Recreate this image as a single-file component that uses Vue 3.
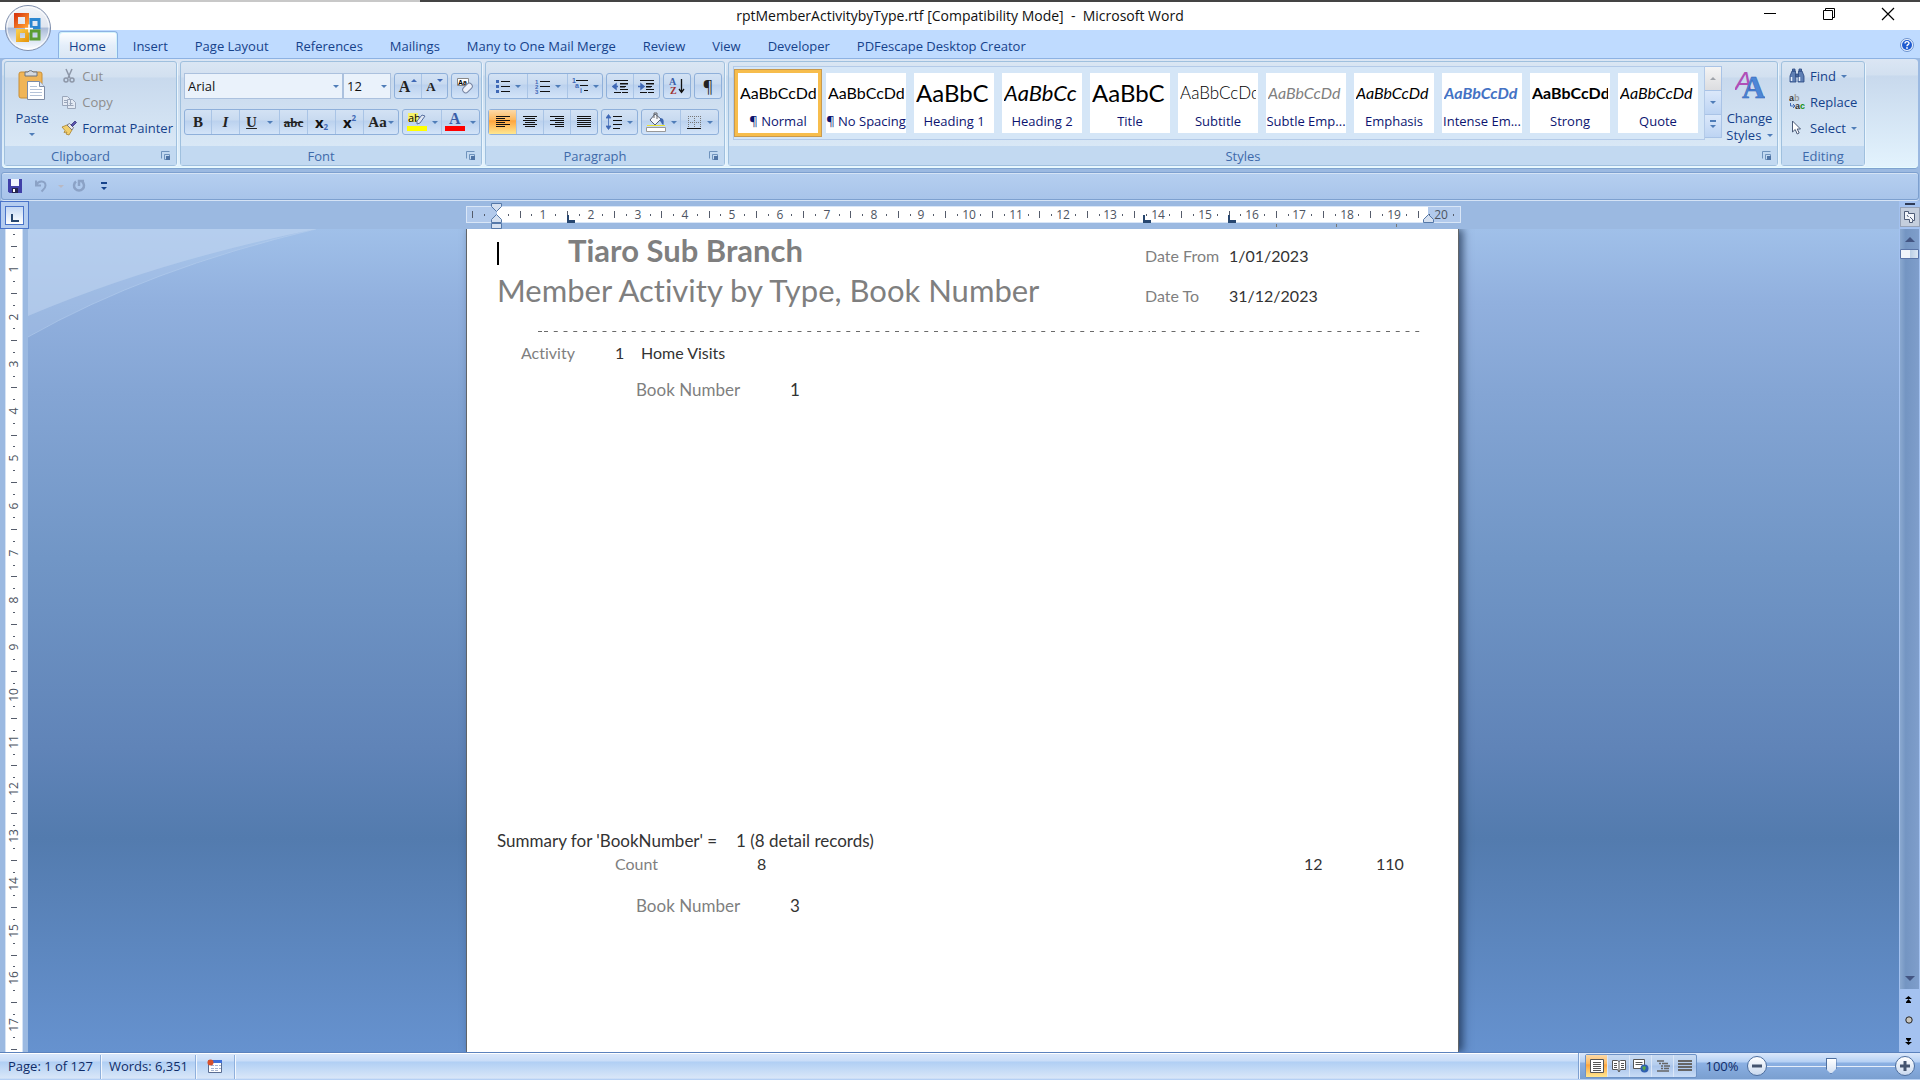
<template>
  <div class="word">
    <div class="backdrop-strip"></div>

    <header class="title-bar">
      <button class="office-btn" aria-label="Office Button">
        <svg width="48" height="48" viewBox="0 0 48 48">
          <defs>
            <linearGradient id="orb" x1="0" y1="0" x2="0" y2="1">
              <stop offset="0" stop-color="#f4f6fa" />
              <stop offset="0.48" stop-color="#dfe5ef" />
              <stop offset="0.5" stop-color="#a9bad6" />
              <stop offset="0.8" stop-color="#dfe8f5" />
              <stop offset="1" stop-color="#ffffff" />
            </linearGradient>
            <linearGradient id="logoRed" x1="0" y1="0" x2="1" y2="1">
              <stop offset="0" stop-color="#d93a10" />
              <stop offset="1" stop-color="#ff9a2e" />
            </linearGradient>
            <linearGradient id="logoYellow" x1="0" y1="0" x2="1" y2="1">
              <stop offset="0" stop-color="#f7c948" />
              <stop offset="1" stop-color="#e89a10" />
            </linearGradient>
          </defs>
          <circle cx="24" cy="24" r="22.5" fill="url(#orb)" stroke="#7f8fad" />
          <circle cx="24" cy="24" r="21" fill="none" stroke="#fff" stroke-opacity="0.8" />
          <rect x="12" y="11" width="11" height="11" fill="none" stroke="url(#logoRed)" stroke-width="4" />
          <rect x="27" y="15.5" width="8" height="8" fill="none" stroke="#2b86d0" stroke-width="3" />
          <rect x="14" y="27" width="9" height="9" fill="none" stroke="url(#logoYellow)" stroke-width="4" />
          <rect x="27" y="27" width="8" height="8" fill="none" stroke="#5a9c30" stroke-width="3" />
          <path d="M21 24.500h8M25 20.500v8" stroke="#fff" stroke-width="1.5" />
        </svg>
      </button>
      <h1>rptMemberActivitybyType.rtf [Compatibility Mode] &nbsp;- &nbsp;Microsoft Word</h1>
      <div class="window-btns">
        <button aria-label="Minimize">
          <svg width="14" height="14"><path d="M1 6.500h12" stroke="#000" /></svg>
        </button>
        <button aria-label="Restore">
          <svg width="14" height="14" fill="none" stroke="#000"><path d="M1.500 3.500h9v9h-9zM3.500 3V1.500h9v9H11" /></svg>
        </button>
        <button aria-label="Close">
          <svg width="14" height="14"><path d="M1 1l12 12M13 1L1 13" stroke="#000" stroke-width="1.200" /></svg>
        </button>
      </div>
    </header>

    <nav class="tabs">
      <button v-for="tab in tabs" :key="tab" :class="{ active: tab === activeTab }" @click="activeTab = tab">
        {{ tab }}
      </button>
      <button class="help" aria-label="Help">
        <svg width="14" height="14" viewBox="0 0 14 14">
          <circle cx="7" cy="7" r="6.500" fill="#eaf2ff" stroke="#6d93cf" />
          <circle cx="7" cy="7" r="5" fill="#1f5bd0" />
          <path d="M5 5.600c0-2.600 4-2.600 4-.4 0 1.400-2 1.500-2 3" fill="none" stroke="#fff" stroke-width="1.400" />
          <circle cx="7" cy="10" r="0.900" fill="#fff" />
        </svg>
      </button>
    </nav>

    <div class="ribbon">
      <section class="group clipboard">
        <div class="body">
          <button class="big paste">
            <svg width="28" height="32" viewBox="0 0 28 32">
              <rect x="1" y="3" width="23" height="26" rx="2" fill="#f0b557" stroke="#c98f36" />
              <path d="M7 3h3a3 3 0 0 1 5 0h4v4H7z" fill="#d5d9de" stroke="#6d737c" />
              <path d="M9.500 12.500h12l5 5v13h-17z" fill="#fff" stroke="#7d8ca6" />
              <path d="M21.500 12.500v5h5" fill="#dbe5f3" stroke="#7d8ca6" />
              <path d="M12 17.500h7M12 20.500h12M12 23.500h12M12 26.500h12" stroke="#b5c3d8" />
            </svg>
            <span>Paste</span>
            <i class="arrow"></i>
          </button>
          <div class="stack">
            <button class="row-btn disabled">
              <svg width="16" height="16" viewBox="0 0 16 16" fill="none" stroke="#8d97a8" stroke-width="1.500">
                <path d="M5 1l4 9M11 1L7 10" />
                <circle cx="5" cy="12" r="2" /><circle cx="11" cy="12" r="2" />
              </svg>
              Cut
            </button>
            <button class="row-btn disabled">
              <svg width="16" height="16" viewBox="0 0 16 16" fill="#e3eaf4" stroke="#9aa6ba">
                <path d="M1.500 2.500h5l3 3v6h-8zM6.500 5.500h5l3 3v6h-8z" />
                <path d="M3 6.500h3M3 8.500h3M8.500 9.500h3M8.500 11.500h4" />
              </svg>
              Copy
            </button>
            <button class="row-btn">
              <svg width="16" height="16" viewBox="0 0 16 16">
                <path d="M1 7l5-2 5 5-3 5-3-1 1-2-3 .500 1-2z" fill="#f1cf6d" stroke="#a9822f" stroke-width="0.800" />
                <path d="M6 5l2.500-1.500 4 4L11 10z" fill="#e8e8ee" stroke="#65656f" stroke-width="0.800" />
                <path d="M10 5l4-4 1.500 1.500-4 4z" fill="#5b55ad" stroke="#37327c" stroke-width="0.800" />
              </svg>
              Format Painter
            </button>
          </div>
        </div>
        <footer class="caption">
          <span>Clipboard</span>
          <button class="launcher" aria-label="Clipboard options"><svg width="10" height="10" viewBox="0 0 10 10"><path d="M.5 7.500v-7h8M3.500 3.500h5v5h-5z" fill="none" stroke="#6f93bd" /><path d="M5 5h4v4H5z" fill="#4f74a5" /></svg></button>
        </footer>
      </section>

      <section class="group font">
        <div class="body rows">
          <div class="tools">
            <label class="combo family">
              <select aria-label="Font"><option>Arial</option></select>
              <i class="arrow"></i>
            </label>
            <label class="combo size">
              <select aria-label="Font Size"><option>12</option></select>
              <i class="arrow"></i>
            </label>
            <div class="btn-group">
              <button class="w26 serif" aria-label="Grow Font"><b class="grow">A</b><i class="caret up"></i></button>
              <button class="w26 serif" aria-label="Shrink Font"><b class="shrink">A</b><i class="caret down"></i></button>
            </div>
            <div class="btn-group">
              <button class="w26" aria-label="Clear Formatting">
                <svg width="18" height="18" viewBox="0 0 18 18">
                  <path d="M1.500 1.500h11v7h-11z" fill="#fff" stroke="#888" />
                  <text x="2" y="8" font-size="7" font-weight="bold" font-family="Liberation Sans, sans-serif">Aa</text>
                  <rect x="6" y="8" width="11" height="6" rx="3" transform="rotate(-45 11.500 11)" fill="#eef2fa" stroke="#7482a0" />
                </svg>
              </button>
            </div>
          </div>
          <div class="tools">
            <div class="btn-group">
              <button class="w26 serif"><b>B</b></button>
              <button class="w28 serif"><b><em>I</em></b></button>
              <button class="w40 serif"><b><u>U</u></b><i class="arrow"></i></button>
              <button class="w28 serif strike"><s>abc</s></button>
              <button class="w28 sub-super"><b>x</b><sub>2</sub></button>
              <button class="w28 sub-super"><b>x</b><sup>2</sup></button>
              <button class="w34 serif change-case"><b>Aa</b><i class="arrow"></i></button>
            </div>
            <div class="btn-group">
              <button class="w38" aria-label="Text Highlight Color">
                <svg width="20" height="20" viewBox="0 0 20 20">
                  <path d="M1 1h10v9H1z" fill="#f7f36b" />
                  <text x="1" y="10" font-size="11" font-family="Open Sans, sans-serif">ab</text>
                  <path d="M10 9l5-6 3 1-5 7-3 1z" fill="#e1e8f3" stroke="#5870a0" />
                  <path d="M0 14h20v5H0z" fill="#ff0" />
                </svg>
                <i class="arrow"></i>
              </button>
              <button class="w38" aria-label="Font Color">
                <svg width="20" height="20" viewBox="0 0 20 20">
                  <text x="4" y="12" font-size="16" font-weight="bold" fill="#3a5ea8" font-family="Liberation Serif, serif">A</text>
                  <path d="M0 14h20v5H0z" fill="#f00" />
                </svg>
                <i class="arrow"></i>
              </button>
            </div>
          </div>
        </div>
        <footer class="caption">
          <span>Font</span>
          <button class="launcher" aria-label="Font options"><svg width="10" height="10" viewBox="0 0 10 10"><path d="M.5 7.500v-7h8M3.500 3.500h5v5h-5z" fill="none" stroke="#6f93bd" /><path d="M5 5h4v4H5z" fill="#4f74a5" /></svg></button>
        </footer>
      </section>

      <section class="group paragraph">
        <div class="body rows">
          <div class="tools">
            <div class="btn-group">
              <button class="w38" aria-label="Bullets">
                <svg width="14" height="14" viewBox="0 0 14 14">
                  <path d="M5 2.500h9M5 7.500h9M5 12.500h9" stroke="#111" />
                  <path d="M0 1h3v3H0zM0 6h3v3H0zM0 11h3v3H0z" fill="#3f68b5" />
                </svg>
                <i class="arrow"></i>
              </button>
              <button class="w40" aria-label="Numbering">
                <svg width="15" height="15" viewBox="0 0 15 15">
                  <path d="M5 2.500h10M5 7.500h10M5 12.500h10" stroke="#111" />
                  <g font-size="6" font-weight="bold" fill="#3f68b5" font-family="Liberation Sans, sans-serif">
                    <text x="0" y="5">1</text><text x="0" y="10">2</text><text x="0" y="15">3</text>
                  </g>
                </svg>
                <i class="arrow"></i>
              </button>
              <button class="w34" aria-label="Multilevel List">
                <svg width="16" height="16" viewBox="0 0 16 16">
                  <path d="M4 2.500h12M8 7.500h8M12 12.500h4" stroke="#111" />
                  <g font-size="7" font-weight="bold" fill="#3f68b5" font-family="Liberation Sans, sans-serif">
                    <text x="0" y="5">1</text><text x="3" y="10">a</text><text x="8" y="15">i</text>
                  </g>
                </svg>
                <i class="arrow"></i>
              </button>
            </div>
            <div class="btn-group">
              <button class="w26" aria-label="Decrease Indent">
                <svg width="17" height="15" viewBox="0 0 17 15">
                  <path d="M2 1.500h14M8 4.500h8M8 7.500h6M8 10.500h8M2 13.500h7M10 13.500h6" stroke="#111" />
                  <path d="M8 4h8v1.500H8zM8 7h5v1.500H8z" fill="#111" />
                  <path d="M6 7.500H2M4 5L1 7.500l3 2.500z" fill="#3f68b5" stroke="#3f68b5" stroke-width="1.500" />
                </svg>
              </button>
              <button class="w26" aria-label="Increase Indent">
                <svg width="17" height="15" viewBox="0 0 17 15">
                  <path d="M2 1.500h14M8 4.500h8M8 7.500h6M8 10.500h8M2 13.500h7M10 13.500h6" stroke="#111" />
                  <path d="M8 4h8v1.500H8zM8 7h5v1.500H8z" fill="#111" />
                  <path d="M0 7.500h4M3 5l3 2.500L3 10z" fill="#3f68b5" stroke="#3f68b5" stroke-width="1.500" />
                </svg>
              </button>
            </div>
            <div class="btn-group">
              <button class="w26" aria-label="Sort">
                <svg width="16" height="18" viewBox="0 0 16 18">
                  <g font-size="10" font-weight="bold" font-family="Liberation Serif, serif">
                    <text x="0" y="8" fill="#3a5ea8">A</text><text x="1" y="17" fill="#a03030">Z</text>
                  </g>
                  <path d="M12.500 2v13M10 12l2.500 3.500L15 12" fill="none" stroke="#111" stroke-width="1.300" />
                </svg>
              </button>
            </div>
            <div class="btn-group">
              <button class="w26 pilcrow" aria-label="Show paragraph marks">¶</button>
            </div>
          </div>
          <div class="tools">
            <div class="btn-group">
              <button
                v-for="align in alignments"
                :key="align.name"
                :class="['align', { pressed: align.name === activeAlign }]"
                :aria-label="align.name"
                @click="activeAlign = align.name"
              >
                <svg width="16" height="12" viewBox="0 0 16 12"><path :d="align.path" stroke="#111" /></svg>
              </button>
            </div>
            <div class="btn-group">
              <button class="w34" aria-label="Line Spacing">
                <svg width="16" height="16" viewBox="0 0 16 16">
                  <path d="M7 2.500h9M7 6.500h9M7 10.500h9M7 14.500h7" stroke="#111" />
                  <path d="M2.500 2v12M0 4l2.500-3.500L5 4zM0 12l2.500 3.500L5 12z" fill="#3f68b5" stroke="#3f68b5" stroke-width="0.800" />
                </svg>
                <i class="arrow"></i>
              </button>
            </div>
            <div class="btn-group">
              <button class="w38" aria-label="Shading">
                <svg width="20" height="20" viewBox="0 0 20 20">
                  <path d="M9 2l6 5-6 6-5-5z" fill="#f4f6fa" stroke="#555f73" />
                  <path d="M8 6V1h3v6" fill="none" stroke="#666" />
                  <path d="M14 6c4 0 4 3 3.500 7-1.500 0-2-3-3.500-4z" fill="#3d66ad" />
                  <path d="M1 13.500h18" stroke="#ece531" />
                  <path d="M.5 15.500h19v4H.5z" fill="#fff" stroke="#999" />
                </svg>
                <i class="arrow"></i>
              </button>
              <button class="w38" aria-label="Borders">
                <svg width="15" height="15" viewBox="0 0 15 15">
                  <path d="M1.500 1v12M7.500 1v12M13.500 1v12M1 1.500h13M1 7.500h13" stroke="#777" stroke-dasharray="1 1" />
                  <path d="M0 13.500h14" stroke="#111" />
                </svg>
                <i class="arrow"></i>
              </button>
            </div>
          </div>
        </div>
        <footer class="caption">
          <span>Paragraph</span>
          <button class="launcher" aria-label="Paragraph options"><svg width="10" height="10" viewBox="0 0 10 10"><path d="M.5 7.500v-7h8M3.500 3.500h5v5h-5z" fill="none" stroke="#6f93bd" /><path d="M5 5h4v4H5z" fill="#4f74a5" /></svg></button>
        </footer>
      </section>

      <section class="group styles">
        <div class="body">
          <div class="gallery">
            <button
              v-for="style in styles"
              :key="style.name"
              :class="['tile', style.kind, { selected: style.name === activeStyle }]"
              @click="activeStyle = style.name"
            >
              <span class="preview">{{ style.sample }}</span>
              <span class="name">{{ style.name }}</span>
            </button>
          </div>
          <div class="gallery-nav">
            <button class="off" aria-label="Previous styles"><i class="arrow up"></i></button>
            <button aria-label="Next styles"><i class="arrow"></i></button>
            <button class="more" aria-label="More styles"><i class="arrow"></i></button>
          </div>
          <button class="big change-styles">
            <svg width="30" height="30" viewBox="0 0 30 30" font-family="Liberation Serif, serif" font-weight="bold">
              <text x="0" y="20" font-size="26" fill="#b04fb8" font-family="Liberation Sans, sans-serif" font-weight="normal" font-style="italic">A</text>
              <text x="7" y="28" font-size="32" fill="#4d86d6" stroke="#2f62b5" stroke-width="0.500">A</text>
            </svg>
            <span>Change</span>
            <span>Styles <i class="arrow"></i></span>
          </button>
        </div>
        <footer class="caption">
          <span>Styles</span>
          <button class="launcher" aria-label="Styles options"><svg width="10" height="10" viewBox="0 0 10 10"><path d="M.5 7.500v-7h8M3.500 3.500h5v5h-5z" fill="none" stroke="#6f93bd" /><path d="M5 5h4v4H5z" fill="#4f74a5" /></svg></button>
        </footer>
      </section>

      <section class="group editing">
        <div class="body">
          <div class="stack">
            <button class="row-btn">
              <svg width="16" height="16" viewBox="0 0 16 16" fill="#5f7fb4" stroke="#27457e" stroke-width="0.800">
                <path d="M3 3h3.500v4L7 14H1V8zM9.500 3H13l2 5v6H9l.5-7z" />
                <path d="M3.500 1H6v2H3.500zM10 1h2.500v2H10zM7 6h2v3H7z" />
                <path d="M2.500 9v4M10.500 9v4" stroke="#e6eefa" stroke-width="1.500" />
              </svg>
              Find <i class="arrow"></i>
            </button>
            <button class="row-btn">
              <svg width="16" height="16" viewBox="0 0 16 16" font-size="9" font-weight="bold" font-family="Liberation Sans, sans-serif">
                <text x="0" y="7" fill="#333">a</text><text x="5" y="7" fill="#999">b</text>
                <text x="6" y="15" fill="#333">a</text><text x="11" y="15" fill="#159015">c</text>
                <path d="M1.500 9v3h4M4 10l2 2-2 2" fill="none" stroke="#3f68b5" />
              </svg>
              Replace
            </button>
            <button class="row-btn">
              <svg width="16" height="16" viewBox="0 0 16 16">
                <path d="M3.500 1v11l2.700-2.500 2 4.500 2-1-2-4h3.300z" fill="#fff" stroke="#4a5a78" />
              </svg>
              Select <i class="arrow"></i>
            </button>
          </div>
        </div>
        <footer class="caption"><span>Editing</span></footer>
      </section>
    </div>

    <div class="quick-access">
      <button aria-label="Save">
        <svg width="14" height="14" viewBox="0 0 14 14">
          <path d="M0 0h14v14H1.500L0 12.500z" fill="#4040a8" />
          <path d="M3 0h8v7H3z" fill="#f1f5ff" /><path d="M4 9h6v5H4z" fill="#26264e" /><path d="M5 10h2v3H5z" fill="#fff" />
        </svg>
      </button>
      <button aria-label="Undo" disabled>
        <svg width="14" height="14" viewBox="0 0 14 14" fill="none" stroke="#8ba2c6" stroke-width="2">
          <path d="M2 1.500v5h5M2.500 6c2-5 9-4.500 9 .500 0 3-2 4-4 6" />
        </svg>
      </button>
      <i class="arrow pale"></i>
      <button class="repeat" aria-label="Repeat" disabled>
        <svg width="14" height="14" viewBox="0 0 14 14" fill="none" stroke="#8ba2c6" stroke-width="2.500">
          <path d="M4 2.500a5 5 0 1 0 6 0M7 7V2h5" />
        </svg>
      </button>
      <button class="customize" aria-label="Customize Quick Access Toolbar"><i class="arrow"></i></button>
    </div>

    <main class="workspace">
      <button class="tab-stop" aria-label="Left Tab"><span><i></i></span></button>
      <div class="ruler-row">
        <svg class="h-ruler" width="995" height="28" viewBox="0 0 995 28">
          <rect x="0.500" y="5.500" width="994" height="16" fill="#b2caec" stroke="#d9e6f7" />
          <rect x="31" y="6" width="931" height="15" fill="#fff" />
          <g v-for="mark in hMarks" :key="mark.q">
            <text v-if="mark.label" :x="mark.pos" y="18" class="ruler-num">{{ mark.label }}</text>
            <rect v-else :x="mark.pos" :y="mark.half ? 10 : 13" width="1" :height="mark.half ? 7 : 2" fill="#555c6b" />
          </g>
          <path v-for="x in tabStops" :key="x" :d="`M${x} 14h2v5h6v3h-8z`" fill="#27466f" />
          <path d="M810.500 23v3M870.500 23v3M930.500 23v3" stroke="#777" />
          <g fill="#d5e0f0" stroke="#5578a8">
            <path d="M25.500 2.500h10v3l-5 5-5-5zM30.500 13.500l5 5v3h-10v-3zM25.500 22.500h10v5h-10z" />
            <path d="M962.500 13.500l5 5v3h-10v-3z" />
          </g>
        </svg>
      </div>
      <div class="view-ruler">
        <span class="split-handle"></span>
        <button aria-label="View Ruler">
          <svg width="12" height="12" viewBox="0 0 12 12" fill="#f2f5fa" stroke="#4f5d78">
            <path d="M.5.500h4v2h6v7h-2v2h-3v-3h-5z" /><path d="M3 4l1.500 2M6 6l3 3" />
          </svg>
        </button>
      </div>

      <div class="v-ruler">
        <svg width="18" height="823">
          <g v-for="mark in vMarks" :key="mark.q">
            <text
              v-if="mark.label"
              x="0"
              y="4"
              :transform="`translate(9 ${mark.pos}) rotate(-90)`"
              class="ruler-num"
            >{{ mark.label }}</text>
            <rect v-else :x="mark.half ? 6 : 8" :y="mark.pos" :width="mark.half ? 6 : 2" height="1" fill="#555c6b" />
          </g>
        </svg>
      </div>

      <div class="canvas">
        <svg class="swoosh" width="300" height="115" viewBox="0 0 300 115">
          <path d="M0 0h288Q120 40 0 108z" fill="#b8d0ee" fill-opacity="0.3" />
          <path d="M0 0h288Q130 32 0 87z" fill="#c4d8f2" fill-opacity="0.5" />
          <path d="M288 0Q120 40 0 108" fill="none" stroke="#b9d2f0" stroke-opacity="0.5" />
        </svg>
        <article class="page">
          <div class="line heading">
            <span class="cursor"></span>
            <h2>Tiaro Sub Branch</h2>
            <span class="label">Date From</span>
            <span>1/01/2023</span>
          </div>
          <div class="line heading">
            <h3>Member Activity by Type, Book Number</h3>
            <span class="label">Date To</span>
            <span>31/12/2023</span>
          </div>
          <svg class="dashes" width="884" height="1">
            <path d="M0 0.500h5M6 0.500H612M614 0.500H884" stroke="#6a6a6a" stroke-dasharray="4 5.750" />
          </svg>
          <div class="line activity">
            <span class="label">Activity</span><span>1</span><span>Home Visits</span>
          </div>
          <div class="line book">
            <span class="label">Book Number</span><span>1</span>
          </div>
          <div class="line summary">
            <span>Summary for 'BookNumber' =</span><span>1 (8 detail records)</span>
          </div>
          <div class="line count">
            <span class="label">Count</span><span>8</span><span>12</span><span>110</span>
          </div>
          <div class="line book next">
            <span class="label">Book Number</span><span>3</span>
          </div>
        </article>
      </div>

      <div class="scrollbar">
        <div class="track">
          <i class="scroll-arrow up"></i>
          <div class="thumb"></div>
          <i class="scroll-arrow down"></i>
        </div>
        <div class="browse">
          <button aria-label="Previous Page"><svg width="7" height="7"><path d="M0 3l3.500-3L7 3zM1 6l2.500-3L6 6zM1 6h5v1H1z" /></svg></button>
          <button aria-label="Select Browse Object"><svg width="8" height="8"><circle cx="4" cy="4" r="3.200" fill="#c9c5bd" stroke="#222" /></svg></button>
          <button aria-label="Next Page"><svg width="7" height="7"><path d="M0 4l3.500 3L7 4zM1 1l2.500 3L6 1zM1 0h5v1H1z" /></svg></button>
        </div>
      </div>
    </main>

    <footer class="status-bar">
      <span class="cell">Page: 1 of 127</span>
      <span class="cell">Words: 6,351</span>
      <span class="cell macro">
        <svg width="16" height="14" viewBox="0 0 16 14">
          <path d="M1.500 1.500h13v12h-13z" fill="#fff" stroke="#5a6d92" />
          <path d="M2 1h13v3H2z" fill="#3f6fd8" />
          <path d="M4 6.500h3M8 6.500h3M12 6.500h2M4 9.500h3M8 9.500h3M12 9.500h2M4 11.500h3M8 11.500h3" stroke="#a5b3cf" />
          <circle cx="3.500" cy="3.500" r="3" fill="#d8512c" />
        </svg>
      </span>
      <div class="status-right">
        <div class="views">
          <button class="pressed" aria-label="Print Layout">
            <svg width="14" height="14" viewBox="0 0 14 14"><path d="M.5.500h13v13H.5z" fill="#fff" stroke="#555" /><path d="M3 3.500h8M3 5.500h8M3 7.500h8M3 9.500h8M3 11.500h8" stroke="#555" /></svg>
          </button>
          <button aria-label="Full Screen Reading">
            <svg width="14" height="14" viewBox="0 0 14 14" fill="#fff" stroke="#555"><path d="M.5 1.500h5l1.500 1 1.500-1h5v9h-5L7 13l-1.500-2.500h-5zM7 2.500V12M2 4.500h3M2 6.500h3M2 8.500h3M9 4.500h3M9 6.500h3M9 8.500h3" /></svg>
          </button>
          <button aria-label="Web Layout">
            <svg width="16" height="14" viewBox="0 0 16 14"><path d="M.5.500h11v9H.5z" fill="#fff" stroke="#555" /><path d="M2.500 3.500h7M2.500 5.500h7" stroke="#555" /><circle cx="11.500" cy="9.500" r="4" fill="#2f5fb0" /><path d="M9 8l3-1 1 2-2 3z" fill="#58a848" /></svg>
          </button>
          <button aria-label="Outline">
            <svg width="14" height="12" viewBox="0 0 14 12"><path d="M1 1h7M3 3.500h2M6 3.500h6M5 6h2M8 6h6M5 8.500h2M8 8.500h5M1 11h12" stroke="#666" stroke-width="1.500" /></svg>
          </button>
          <button aria-label="Draft">
            <svg width="14" height="12" viewBox="0 0 14 12"><path d="M0 1h14M0 4h14M0 7h14M0 10h14" stroke="#666" stroke-width="2" /></svg>
          </button>
        </div>
        <span class="zoom-value">100%</span>
        <button class="round" aria-label="Zoom Out">
          <svg width="12" height="12"><path d="M1 6h10" stroke="#44546f" stroke-width="3" /></svg>
        </button>
        <input v-model="zoom" type="range" min="0" max="200" aria-label="Zoom" />
        <button class="round" aria-label="Zoom In">
          <svg width="12" height="12"><path d="M1 6h10M6 1v10" stroke="#44546f" stroke-width="3" /></svg>
        </button>
      </div>
    </footer>
  </div>
</template>

<script setup>
import { ref } from 'vue'

const activeTab = ref('Home')
const activeStyle = ref('¶ Normal')
const activeAlign = ref('Align Left')
const zoom = ref(100)

const tabs = [
  'Home', 'Insert', 'Page Layout', 'References', 'Mailings',
  'Many to One Mail Merge', 'Review', 'View', 'Developer', 'PDFescape Desktop Creator',
]

const alignments = [
  { name: 'Align Left', path: 'M1 .5h14M1 2.500h9M1 4.500h14M1 6.500h9M1 8.500h14M1 10.500h9' },
  { name: 'Center', path: 'M1 .5h14M3 2.500h10M1 4.500h14M3 6.500h10M1 8.500h14M3 10.500h10' },
  { name: 'Align Right', path: 'M1 .5h14M6 2.500h9M1 4.500h14M6 6.500h9M1 8.500h14M6 10.500h9' },
  { name: 'Justify', path: 'M1 .5h14M1 2.500h14M1 4.500h14M1 6.500h14M1 8.500h14M1 10.500h14' },
]

const styles = [
  { name: '¶ Normal', sample: 'AaBbCcDd', kind: 'plain' },
  { name: '¶ No Spacing', sample: 'AaBbCcDd', kind: 'plain' },
  { name: 'Heading 1', sample: 'AaBbC', kind: 'large' },
  { name: 'Heading 2', sample: 'AaBbCc', kind: 'medium' },
  { name: 'Title', sample: 'AaBbC', kind: 'large' },
  { name: 'Subtitle', sample: 'AaBbCcDd', kind: 'light' },
  { name: 'Subtle Emp...', sample: 'AaBbCcDd', kind: 'subtle' },
  { name: 'Emphasis', sample: 'AaBbCcDd', kind: 'italic' },
  { name: 'Intense Em...', sample: 'AaBbCcDd', kind: 'intense' },
  { name: 'Strong', sample: 'AaBbCcDd', kind: 'strong' },
  { name: 'Quote', sample: 'AaBbCcDd', kind: 'italic' },
]

const tabStops = [101, 677, 762]

// one mark per quarter centimetre, numbers on whole centimetres
const CM = 47.26
function marks(from, to, origin) {
  const list = []
  for (let q = from; q <= to; q++) {
    if (q === 0) continue
    list.push({
      q,
      pos: Math.round(origin + (q * CM) / 4),
      label: q > 0 && q % 4 === 0 ? q / 4 : null,
      half: Math.abs(q % 4) === 2,
    })
  }
  return list
}

const hMarks = marks(-2, 81, 30)
const vMarks = marks(1, 70, -7)
</script>

<style>
body {
  margin: 0;
}
</style>

<style scoped>
.word {
  min-height: 100vh;
  display: flex;
  flex-direction: column;
  font-family: "Open Sans", "Noto Sans", sans-serif;
  font-size: 13px;
  line-height: 17px;
  color: #15428b;
  background: #9bb9e1;
}

button {
  font: inherit;
  color: inherit;
  background: none;
  border: none;
  padding: 0;
  display: flex;
  align-items: center;
  justify-content: center;
  white-space: nowrap;
}

.arrow {
  display: inline-block;
  flex: none;
  border: 3px solid transparent;
  border-top-color: #4f7db8;
  border-bottom-width: 0;
}

.arrow.up {
  border-top-width: 0;
  border-bottom: 3px solid #a0a4aa;
}

.backdrop-strip {
  height: 2px;
  background: linear-gradient(90deg, #444 60px, #c8c8c8 60px, #c8c8c8 420px, #444 420px);
}

/* title bar */
.title-bar {
  position: relative;
  height: 28px;
  display: flex;
  justify-content: center;
  background: #fff;
}

.title-bar h1 {
  margin: 0;
  font-size: 14px;
  font-weight: 400;
  line-height: 28px;
  color: #111;
}

.office-btn {
  position: absolute;
  left: 4px;
  top: 2px;
  z-index: 2;
}

.window-btns {
  position: absolute;
  right: 25px;
  top: 5px;
  display: flex;
  gap: 45px;
}

/* tabs */
.tabs {
  height: 28px;
  padding-left: 59px;
  display: flex;
  align-items: flex-end;
  gap: 3px;
  background: #bfdbff;
}

.tabs button {
  box-sizing: border-box;
  height: 27px;
  padding: 4px 12px 0;
}

.tabs .active {
  margin: 0 0 -1px -1px;
  height: 28px;
  padding: 2px 11px 0 10px;
  border: 1px solid #8db2e3;
  border-bottom: none;
  border-radius: 4px 4px 0 0;
  background: linear-gradient(#fff, #e4eefa 50%, #dbe6f4);
  box-shadow: inset 1px 1px 0 #d2f2fb, inset -1px 0 0 #d2f2fb;
}

.tabs .help {
  margin-left: auto;
  padding: 0 6px;
}

/* ribbon */
.ribbon {
  height: 107px;
  margin: 0 2px;
  padding: 2px 53px 0 2px;
  display: flex;
  gap: 3px;
  border-top: 1px solid #8db2e3;
  border-radius: 4px;
  background: linear-gradient(#dbe6f4, #d2e0f0 16px, #c8d9ed 17px, #e3f3fd);
  box-shadow: inset 0 -1px 0 #e6fbff, 0 1px 0 #7fa3cf;
}

.group {
  flex: none;
  height: 105px;
  box-sizing: border-box;
  display: flex;
  flex-direction: column;
  border: 1px solid #9fc0de;
  border-radius: 3px;
  background: linear-gradient(#dae6f3, #d2e0f0 15px, #c8d9ed 16px, #d9e8f6 86px);
  box-shadow: 1px 1px 0 #eaf5fd;
}

.clipboard {
  width: 173px;
}

.font {
  width: 302px;
}

.paragraph {
  width: 240px;
}

.styles {
  flex: 1;
  min-width: 0;
}

.editing {
  width: 84px;
}

.body {
  flex: 1;
  min-height: 0;
  display: flex;
}

.caption {
  height: 19px;
  display: flex;
  align-items: center;
  background: #c2d9f1;
  color: #3e6aaa;
}

.caption span {
  flex: 1;
  padding-top: 2px;
  text-align: center;
}

.launcher {
  width: 20px;
  height: 16px;
}

.big {
  flex-direction: column;
  justify-content: flex-start;
}

.paste {
  width: 58px;
  padding: 7px 0 0 2px;
}

.paste span {
  margin: 9px 0 6px;
}

.stack {
  display: flex;
  flex-direction: column;
  padding: 1px 0 0 1px;
}

.editing .stack {
  padding-left: 4px;
}

.row-btn {
  height: 26px;
  padding: 0 3px;
  justify-content: flex-start;
  gap: 5px;
}

.disabled {
  color: #8d8d8d;
}

.rows {
  flex-direction: column;
  gap: 10px;
  padding: 11px 0 0 3px;
}

.paragraph .rows {
  padding-left: 2px;
}

.tools {
  display: flex;
  gap: 3px;
}

.btn-group {
  display: flex;
  border: 1px solid #8fb0da;
  border-radius: 3px;
  background: linear-gradient(#d3e2f4, #c8daf0 10px, #bbd1ee 11px, #d3e4f8);
}

.btn-group button {
  box-sizing: border-box;
  height: 24px;
  gap: 5px;
  border-left: 1px solid #a9c4e6;
}

.btn-group button:first-child {
  border-left: none;
}

.w26 {
  width: 26px;
}

.w28 {
  width: 28px;
}

.w34 {
  width: 35px;
}

.w38 {
  width: 38px;
}

.w40 {
  width: 40px;
}

.align {
  width: 27px;
}

.pressed {
  background: linear-gradient(#fbd9a8, #fdb95f 40%, #fda53f 45%, #ffe790);
}

.serif {
  font-family: "Liberation Serif", serif;
  font-size: 15px;
  color: #222;
}

.w40.serif {
  gap: 10px;
}

.btn-group .w26.serif,
.btn-group .change-case {
  gap: 1px;
}

.grow {
  font-size: 16px;
}

.shrink {
  font-size: 13px;
}

.caret {
  align-self: flex-start;
  margin-top: 5px;
  border: 3px solid transparent;
}

.caret.up {
  border-top: none;
  border-bottom-color: #3f68b5;
}

.caret.down {
  border-bottom: none;
  border-top-color: #3f68b5;
}

.strike {
  font-size: 13px;
  font-weight: bold;
}

.btn-group .sub-super {
  gap: 0;
  color: #111;
}

.sub-super b {
  font-size: 15px;
}

.sub-super sub,
.sub-super sup {
  font-size: 8px;
  font-weight: bold;
  line-height: 12px;
  color: #3f68b5;
}

.sub-super sub {
  align-self: flex-end;
  margin-bottom: 1px;
}

.sub-super sup {
  align-self: flex-start;
  margin-top: 2px;
}

.pilcrow {
  font-size: 16px;
  color: #222;
}

.combo {
  position: relative;
  height: 26px;
}

.combo select {
  width: 100%;
  height: 26px;
  padding: 0 3px;
  font: inherit;
  color: #111;
  appearance: none;
  border: 1px solid #abc1de;
  border-radius: 0;
  background: #eaf2fb;
}

.combo .arrow {
  position: absolute;
  right: 4px;
  top: 12px;
}

.family {
  width: 159px;
}

.size {
  width: 48px;
  margin-left: -3px;
}

/* styles gallery */
.gallery {
  flex: 1;
  min-width: 0;
  height: 72px;
  margin: 4px 0 0 4px;
  padding: 0 4px;
  display: flex;
  align-items: center;
  gap: 8px;
  overflow: hidden;
  border: 1px solid #b3cae8;
  background: #d5e6f7;
}

.tile {
  flex: none;
  width: 80px;
  height: 60px;
  flex-direction: column;
  justify-content: flex-start;
  background: #fff;
  color: #0c1470;
}

.selected {
  outline: 3px solid #f7bd4c;
  box-shadow: 0 0 0 4px #c99a4e;
}

.preview {
  width: 76px;
  height: 40px;
  overflow: hidden;
  text-align: left;
  font-family: Lato, sans-serif;
  font-size: 16px;
  line-height: 40px;
  color: #000;
}

.large .preview {
  font-size: 24px;
}

.medium .preview {
  font-size: 22px;
  font-style: italic;
}

.light .preview {
  font-weight: 300;
  font-size: 17px;
}

.subtle .preview {
  font-style: italic;
  color: #808080;
}

.italic .preview {
  font-style: italic;
}

.intense .preview {
  font-weight: bold;
  font-style: italic;
  color: #4472c4;
}

.strong .preview {
  font-weight: bold;
}

.gallery-nav {
  width: 17px;
  margin-top: 4px;
  display: flex;
  flex-direction: column;
}

.gallery-nav button {
  height: 24px;
  border: 1px solid #a9c3e6;
  border-width: 1px 1px 0 0;
  background: linear-gradient(#dbe8fa, #bdd4f3);
}

.gallery-nav .off {
  background: linear-gradient(#f4f4f4, #dcdde0);
}

.gallery-nav .more {
  border-bottom-width: 1px;
}

.more .arrow,
.customize .arrow {
  position: relative;
}

.more .arrow::before,
.customize .arrow::before {
  content: "";
  position: absolute;
  left: -3px;
  top: -8px;
  width: 6px;
  height: 2px;
  background: #4f7db8;
}

.change-styles {
  width: 55px;
  padding-top: 8px;
}

.change-styles span {
  line-height: 17px;
}

.change-styles svg {
  margin-bottom: 10px;
}

.change-styles .arrow {
  margin: 0 0 3px 2px;
}

/* quick access toolbar */
.quick-access {
  height: 26px;
  margin: 4px 1px 1px;
  padding-left: 6px;
  display: flex;
  align-items: center;
  gap: 12px;
  border: 1px solid #7da0cf;
  border-radius: 3px;
  background: linear-gradient(#b5cff0, #a8c4ea);
  box-shadow: inset 0 1px 0 #d5e3f5, 0 1px 0 #d5e3f5;
}

.quick-access .arrow.pale {
  border-top-color: #b9b9c4;
  margin-left: -2px;
}

.repeat {
  margin-left: -4px;
}

.customize {
  margin-left: 3px;
  padding-top: 5px;
}

.customize .arrow {
  border-top-color: #15428b;
}

.customize .arrow::before {
  background: #15428b;
}

/* rulers and page */
.workspace {
  flex: 1;
  display: grid;
  grid-template-columns: 28px 1fr 21px;
  grid-template-rows: 28px 1fr;
}

.tab-stop {
  width: 29px;
  height: 28px;
  border: 1px solid #4a74c9;
  background: #b5cdf0;
}

.tab-stop span {
  width: 17px;
  height: 17px;
  border: 1px solid #4a74c9;
  background: linear-gradient(#c4d8f4, #fff);
}

.tab-stop i {
  display: block;
  width: 6px;
  height: 6px;
  margin: 7px 0 0 5px;
  border-left: 2px solid #27466f;
  border-bottom: 2px solid #27466f;
}

.ruler-row {
  display: flex;
  justify-content: center;
}

.h-ruler {
  display: block;
  flex: none;
}

.ruler-num {
  font-size: 12px;
  text-anchor: middle;
  fill: #4d5462;
}

.view-ruler {
  display: flex;
  flex-direction: column;
  align-items: center;
  background: #a4c2f0;
}

.split-handle {
  width: 10px;
  height: 2px;
  margin: 2px 0;
  background: #2f3b55;
}

.view-ruler button {
  width: 20px;
  height: 20px;
  border: 1px solid #97a3b8;
  background: #c4cedd;
}

.v-ruler {
  position: relative;
  margin: 0 5px;
  overflow: hidden;
  border-left: 1px solid #d5e3f5;
  border-right: 1px solid #d5e3f5;
  background: #fff;
}

.v-ruler svg {
  position: absolute;
  left: -1px;
  top: 0;
}

.canvas {
  position: relative;
  display: flex;
  justify-content: center;
  overflow: hidden;
  background: linear-gradient(#a0c0e9, #91b0de 9%, #84a5d4 20%, #7196c6 40%, #6084b8 63%, #537bae 74%, #6692cf);
}

.swoosh {
  position: absolute;
  left: 0;
  top: 0;
}

.page {
  position: relative;
  flex: none;
  width: 961px;
  margin-right: 2px;
  padding: 1px 0 0 30px;
  border: solid #606468;
  border-width: 0 1px;
  background: #fff;
  box-shadow: 4px 0 8px rgba(20, 40, 70, 0.7);
  font-family: Lato, Carlito, sans-serif;
  font-size: 16px;
  font-variant-ligatures: none;
  color: #333;
}

.line {
  height: 23px;
  line-height: 23px;
  display: grid;
  align-items: baseline;
  white-space: nowrap;
}

.label {
  color: #7f7f7f;
}

.heading {
  height: 40px;
  line-height: 40px;
  grid-template-columns: 71px 577px 84px auto;
}

.heading h2,
.heading h3 {
  margin: 0;
  font-size: 31px;
  color: #7f7f7f;
}

.heading h3 {
  grid-column: span 2;
  font-weight: 400;
}

.cursor {
  width: 2px;
  height: 23px;
  align-self: center;
  background: #000;
}

.dashes {
  display: block;
  margin: 21px 0 9px 41px;
}

.activity {
  padding-left: 24px;
  grid-template-columns: 94px 26px auto;
}

.book {
  margin-top: 14px;
  padding-left: 139px;
  grid-template-columns: 154px auto;
  font-size: 17px;
}

.summary {
  margin-top: 428px;
  grid-template-columns: 239px auto;
  font-size: 17px;
}

.count {
  padding-left: 118px;
  grid-template-columns: 142px 547px 72px auto;
}

.next {
  margin-top: 19px;
}

/* scrollbar */
.scrollbar {
  display: flex;
  flex-direction: column;
  background: #a4c2f0;
}

.track {
  flex: 1;
  margin: 0 1px;
  display: flex;
  flex-direction: column;
  align-items: center;
  background: linear-gradient(90deg, #8ba9d0, #7495c2 30%, #7f9ecb);
}

.scroll-arrow {
  border: 5px solid transparent;
}

.scroll-arrow.up {
  margin-top: 8px;
  border-top: none;
  border-bottom-color: #435582;
}

.scroll-arrow.down {
  margin: auto 0 8px;
  border-bottom: none;
  border-top-color: #435582;
}

.thumb {
  width: 17px;
  height: 8px;
  margin-top: 7px;
  border: 1px solid #5a75a8;
  border-radius: 1px;
  background: linear-gradient(90deg, #f0f5fb 50%, #b9cde4 50%, #dbe7f4);
}

.browse {
  height: 63px;
  padding-right: 2px;
  display: flex;
  flex-direction: column;
  justify-content: space-around;
  align-items: center;
}

/* status bar */
.status-bar {
  height: 26px;
  display: flex;
  border-top: 1px solid #5b82bd;
  box-shadow: inset 0 1px 0 #fff;
  background: linear-gradient(#dbe8fb, #c9ddf8 8px, #b0cff4 9px, #d8e6f8 25px, #a9c8f2);
  color: #0f2c68;
  padding-bottom: 1px;
}

.cell {
  display: flex;
  align-items: center;
  padding: 0 7px 2px 8px;
  margin-top: 2px;
  border-right: 1px solid #8fb0dc;
  box-shadow: 1px 0 0 #f2f7fe;
}

.macro {
  padding: 0 11px 3px;
}

.status-right {
  margin-left: auto;
  padding: 0 5px 0 6px;
  display: flex;
  align-items: center;
  border-left: 1px solid #7d9fd0;
  box-shadow: inset 1px 0 0 #eaf2fd;
  background: linear-gradient(#dbe8fb, #b5d0f4 9px, #8bb0e3 10px, #7a9fd0);
}

.views {
  display: flex;
  border: 1px solid #6d92c6;
  border-radius: 2px;
  background: linear-gradient(#c9dbf2, #b4cdee 10px, #a9c4ea 11px, #c8dcf6);
}

.views button {
  box-sizing: border-box;
  width: 22px;
  height: 22px;
  border-right: 1px solid #dbe7f8;
}

.views button:last-child {
  border-right: none;
}

.zoom-value {
  width: 50px;
  text-align: center;
}

.round {
  box-sizing: border-box;
  width: 20px;
  height: 20px;
  border: 1px solid #4e6f9f;
  border-radius: 50%;
  background: linear-gradient(#fff, #c9d9ef);
}

input[type="range"] {
  width: 128px;
  height: 20px;
  margin: 0;
  appearance: none;
  background: linear-gradient(#e6eefa, #e6eefa) center / 100% 1px no-repeat;
}

input[type="range"]::-webkit-slider-thumb {
  appearance: none;
  width: 11px;
  height: 16px;
  background: linear-gradient(#fff, #d3e0f2);
  border: 1px solid #4e6f9f;
  clip-path: polygon(0 0, 100% 0, 100% 65%, 50% 100%, 0 65%);
}
</style>
